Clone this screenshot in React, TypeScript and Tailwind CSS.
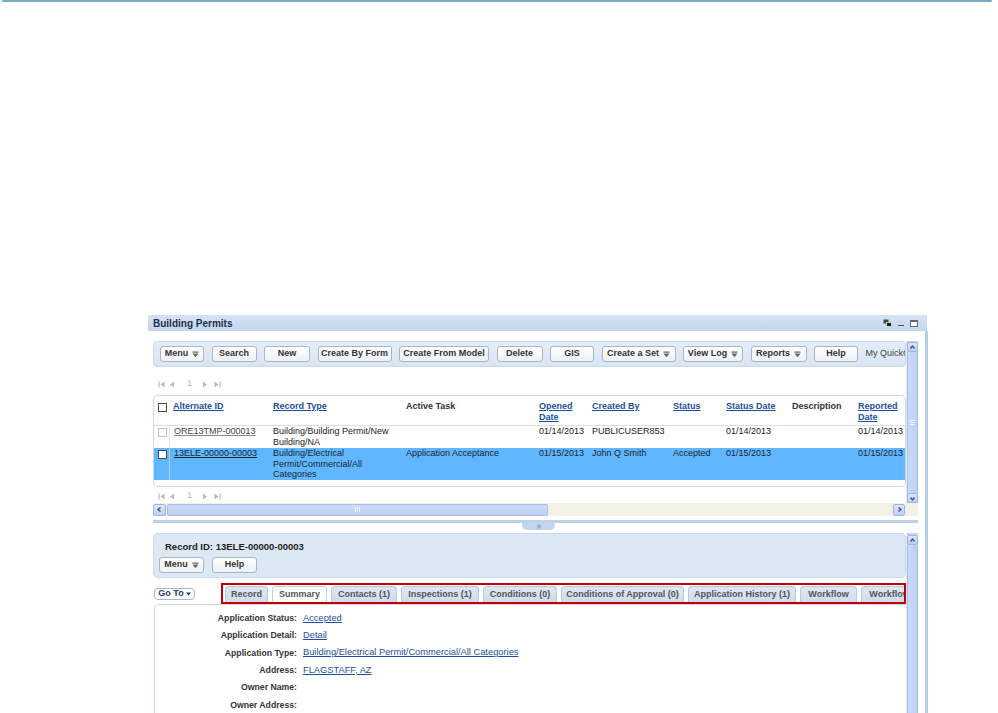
import React from 'react';

type Dir = 'up' | 'down' | 'left' | 'right';

const chevrons: Record<Dir, string> = {
  up: 'M1.5 4.5 L3.5 2 L5.5 4.5',
  down: 'M1.5 2.5 L3.5 5 L5.5 2.5',
  left: 'M4.5 1.5 L2 3.5 L4.5 5.5',
  right: 'M2.5 1.5 L5 3.5 L2.5 5.5',
};

function ArrowBtn({ dir, className = '' }: { dir: Dir; className?: string }) {
  return (
    <div
      className={`flex items-center justify-center rounded-[2px] border border-[#9fb5de] bg-gradient-to-b from-[#dbe6fb] to-[#bdd0f4] ${className}`}
    >
      <svg width="7" height="7" viewBox="0 0 7 7">
        <path d={chevrons[dir]} fill="none" stroke="#3d5488" strokeWidth="1.4" />
      </svg>
    </div>
  );
}

function MenuIcon() {
  return (
    <svg width="7" height="7" viewBox="0 0 7 7" className="ml-[4px]">
      <rect x="0.5" y="0.5" width="6" height="1.2" fill="#666" />
      <path d="M0.5 2.6 H6.5 L3.5 6.2 Z" fill="#666" />
    </svg>
  );
}

function Btn({ label, w, menu }: { label: string; w: string; menu?: boolean }) {
  return (
    <div
      className={`flex h-[16px] shrink-0 items-center justify-center rounded-[3px] border border-[#aab6c3] bg-gradient-to-b from-white to-[#edf1f5] text-[9px] font-bold text-[#333] ${w}`}
    >
      {label}
      {menu && <MenuIcon />}
    </div>
  );
}

function Pager() {
  return (
    <div className="flex h-[12px] items-center pl-[5px] text-[9px] text-[#b5b5b5]">
      <svg width="7" height="7" viewBox="0 0 7 7">
        <rect x="0.5" y="0.5" width="1.2" height="6" fill="#b9b9b9" />
        <path d="M6.5 0.5 V6.5 L2.5 3.5 Z" fill="#b9b9b9" />
      </svg>
      <svg width="6" height="7" viewBox="0 0 6 7" className="ml-[4px]">
        <path d="M5 0.5 V6.5 L1 3.5 Z" fill="#b9b9b9" />
      </svg>
      <span className="ml-[12px]">1</span>
      <svg width="6" height="7" viewBox="0 0 6 7" className="ml-[10px]">
        <path d="M1 0.5 V6.5 L5 3.5 Z" fill="#b9b9b9" />
      </svg>
      <svg width="7" height="7" viewBox="0 0 7 7" className="ml-[6px]">
        <path d="M0.5 0.5 V6.5 L4.5 3.5 Z" fill="#b9b9b9" />
        <rect x="5.3" y="0.5" width="1.2" height="6" fill="#b9b9b9" />
      </svg>
    </div>
  );
}

function Check({ light }: { light?: boolean }) {
  return (
    <div
      className={`mt-[2px] h-[9px] w-[9px] border bg-white ${light ? 'border-[#c4c4c4]' : 'border-[#4a4a4a]'}`}
    />
  );
}

const cols = 'grid grid-cols-[11px_104px_133px_133px_53px_81px_53px_66px_66px_1fr]';

const toolbar = [
  { label: 'Menu', w: 'w-[44px]', menu: true },
  { label: 'Search', w: 'w-[45px]' },
  { label: 'New', w: 'w-[46px]' },
  { label: 'Create By Form', w: 'w-[74px]' },
  { label: 'Create From Model', w: 'w-[90px]' },
  { label: 'Delete', w: 'w-[46px]' },
  { label: 'GIS', w: 'w-[44px]' },
  { label: 'Create a Set', w: 'w-[74px]', menu: true },
  { label: 'View Log', w: 'w-[60px]', menu: true },
  { label: 'Reports', w: 'w-[56px]', menu: true },
  { label: 'Help', w: 'w-[44px]' },
];

const tabs = [
  { label: 'Record', w: 'w-[43px]' },
  { label: 'Summary', w: 'w-[55px]', active: true },
  { label: 'Contacts (1)', w: 'w-[66px]' },
  { label: 'Inspections (1)', w: 'w-[78px]' },
  { label: 'Conditions (0)', w: 'w-[74px]' },
  { label: 'Conditions of Approval (0)', w: 'w-[123px]' },
  { label: 'Application History (1)', w: 'w-[108px]' },
  { label: 'Workflow', w: 'w-[57px]' },
  { label: 'Workflow', w: 'w-[57px]' },
];

const summary = [
  { label: 'Application Status:', value: 'Accepted' },
  { label: 'Application Detail:', value: 'Detail' },
  { label: 'Application Type:', value: 'Building/Electrical Permit/Commercial/All Categories' },
  { label: 'Address:', value: 'FLAGSTAFF, AZ' },
  { label: 'Owner Name:', value: '' },
  { label: 'Owner Address:', value: '' },
];

function HeadLink({ children }: { children: React.ReactNode }) {
  return <span className="text-[#1c4f9c] underline decoration-[#1c4f9c]">{children}</span>;
}

export default function App() {
  return (
    <div className="h-[713px] w-[998px] overflow-hidden bg-white font-['Liberation_Sans',Arial,sans-serif] text-[9px] text-[#222]">
      <div className="ml-[2px] h-[2px] w-[990px] rounded-full bg-[#72aec4]" />

      <div className="ml-[148px] mt-[313px] w-[780px]">
        {/* title bar */}
        <div className="flex h-[16px] w-[779px] items-center bg-gradient-to-b from-[#d5e3f3] to-[#c3d7ee] pl-[5px] pr-[9px]">
          <span className="text-[10px] font-bold text-[#1d2f4d]">Building Permits</span>
          <div className="ml-auto flex items-center gap-[6px]">
            <svg width="9" height="8" viewBox="0 0 9 8">
              <rect x="0.5" y="0.5" width="5" height="4" fill="#444" />
              <rect x="3.5" y="3.5" width="5" height="4" fill="#222" stroke="#fff" strokeWidth="0.6" />
            </svg>
            <div className="mt-[5px] h-[1.5px] w-[6px] bg-[#555]" />
            <div className="h-[7px] w-[8px] border border-t-2 border-[#666] bg-white" />
          </div>
        </div>

        <div className="flex">
          <div className="w-[770px] pl-[5px]">
            {/* top section */}
            <div className="flex pt-[10px]">
              <div className="w-[753px]">
                <div className="flex h-[26px] items-center gap-[7.5px] overflow-hidden rounded-[4px] border border-[#c9d9ea] bg-gradient-to-b from-[#e4edf7] to-[#d8e5f3] pl-[6px]">
                  {toolbar.map((b) => (
                    <Btn key={b.label} label={b.label} w={b.w} menu={b.menu} />
                  ))}
                  <span className="shrink-0 whitespace-nowrap text-[9px] text-[#444]">My QuickQ</span>
                </div>

                <div className="mt-[11px]">
                  <Pager />
                </div>

                <div className="mt-[5px] h-[92px] overflow-hidden rounded-[5px] border border-[#c9d8ea] bg-white">
                  <div className={`${cols} border-b border-[#d6e0eb] pl-[4px] pt-[5px] pb-[2px] font-bold leading-[11px]`}>
                    <Check />
                    <div className="pl-[4px]"><HeadLink>Alternate ID</HeadLink></div>
                    <div><HeadLink>Record Type</HeadLink></div>
                    <div className="text-[#333]">Active Task</div>
                    <div><HeadLink>Opened<br />Date</HeadLink></div>
                    <div><HeadLink>Created By</HeadLink></div>
                    <div><HeadLink>Status</HeadLink></div>
                    <div><HeadLink>Status Date</HeadLink></div>
                    <div className="text-[#333]">Description</div>
                    <div><HeadLink>Reported<br />Date</HeadLink></div>
                  </div>
                  <div className={`${cols} h-[22px] pl-[4px] leading-[11px]`}>
                    <Check light />
                    <div className="border-l border-[#dfe5ec] pl-[4px]">
                      <span className="text-[#444] underline decoration-[#888]">ORE13TMP-000013</span>
                    </div>
                    <div>Building/Building Permit/New<br />Building/NA</div>
                    <div />
                    <div>01/14/2013</div>
                    <div>PUBLICUSER853</div>
                    <div />
                    <div>01/14/2013</div>
                    <div />
                    <div>01/14/2013</div>
                  </div>
                  <div className={`${cols} h-[32px] bg-[#60b7fd] pl-[4px] leading-[10.5px] text-[#1b2633]`}>
                    <Check />
                    <div className="border-l border-[#a9d7fd] pl-[4px]">
                      <span className="underline decoration-[#1b2633]">13ELE-00000-00003</span>
                    </div>
                    <div>Building/Electrical<br />Permit/Commercial/All<br />Categories</div>
                    <div>Application Acceptance</div>
                    <div>01/15/2013</div>
                    <div>John Q Smith</div>
                    <div>Accepted</div>
                    <div>01/15/2013</div>
                    <div />
                    <div>01/15/2013</div>
                  </div>
                </div>

                <div className="mt-[3px]">
                  <Pager />
                </div>
              </div>

              {/* vertical scroll, top */}
              <div className="flex h-[162px] w-[12px] flex-col border-l border-[#e4e9ef] bg-[#c3d5f7] pt-[1px]">
                <ArrowBtn dir="up" className="h-[10px] w-[11px]" />
                <div className="flex flex-1 items-center justify-center border-x border-[#a9bfe6] bg-gradient-to-r from-[#c9daf9] to-[#bccff4]">
                  <div className="flex flex-col gap-[1px]">
                    <div className="h-[1px] w-[5px] bg-[#eef3fc]" />
                    <div className="h-[1px] w-[5px] bg-[#eef3fc]" />
                    <div className="h-[1px] w-[5px] bg-[#eef3fc]" />
                  </div>
                </div>
                <ArrowBtn dir="down" className="h-[10px] w-[11px]" />
              </div>
            </div>

            {/* horizontal scroll */}
            <div className="flex h-[13px] w-[765px] items-center bg-[#f3f1e5]">
              <ArrowBtn dir="left" className="h-[12px] w-[13px]" />
              <div className="ml-[1px] flex h-[12px] w-[381px] items-center justify-center rounded-[2px] border border-[#a9bfe6] bg-gradient-to-b from-[#cddcf9] to-[#bcd0f5]">
                <div className="flex gap-[1px]">
                  <div className="h-[5px] w-[1px] bg-[#eef3fc]" />
                  <div className="h-[5px] w-[1px] bg-[#eef3fc]" />
                  <div className="h-[5px] w-[1px] bg-[#eef3fc]" />
                </div>
              </div>
              <div className="w-[345px]" />
              <ArrowBtn dir="right" className="h-[12px] w-[12px]" />
            </div>

            {/* splitter */}
            <div className="mt-[4px] h-[3px] w-[765px] bg-[#bdd1e8]" />
            <div className="ml-[369px] flex h-[7px] w-[33px] items-center justify-center rounded-b-[5px] bg-[#c2d5eb]">
              <svg width="6" height="5" viewBox="0 0 6 5">
                <path d="M1 2.5 L3 0.8 L5 2.5 M1 4.5 L3 2.8 L5 4.5" fill="none" stroke="#6b7f9c" strokeWidth="0.8" />
              </svg>
            </div>

            {/* lower section */}
            <div className="mt-[3px] flex">
              <div className="w-[753px]">
                <div className="h-[45px] rounded-[5px] border border-[#c9d9ea] bg-[#dce8f4] pl-[11px] pt-[7px]">
                  <div className="text-[9.5px] leading-[12px] font-bold text-[#222]">Record ID: 13ELE-00000-00003</div>
                  <div className="mt-[4px] -ml-[6px] flex gap-[8px]">
                    <Btn label="Menu" w="w-[45px]" menu />
                    <Btn label="Help" w="w-[45px]" />
                  </div>
                </div>

                <div className="mt-[5px] flex h-[21px] items-center">
                  <div className="ml-[1px] flex h-[12px] w-[41px] items-center justify-center rounded-[4px] border border-[#a9b6c3] bg-white text-[9px] font-bold text-[#1e3c68]">
                    Go To
                    <svg width="5" height="4" viewBox="0 0 5 4" className="ml-[2px]">
                      <path d="M0 0.5 H5 L2.5 3.5 Z" fill="#1e3c68" />
                    </svg>
                  </div>
                  <div className="ml-[26px] flex h-[21px] w-[685px] items-end gap-[4px] overflow-hidden border-2 border-[#c00000] pl-[2px]">
                    {tabs.map((t, i) => (
                      <div
                        key={i}
                        className={`flex h-[16px] shrink-0 items-center justify-center rounded-t-[4px] border border-b-0 text-[9px] font-bold ${t.w} ${
                          t.active ? 'border-[#c2cfdd] bg-white text-[#555]' : 'border-[#b9c9da] bg-gradient-to-b from-[#dee8f3] to-[#cfdcea] text-[#555]'
                        }`}
                      >
                        {t.label}
                      </div>
                    ))}
                  </div>
                </div>

                <div className="ml-[1px] h-[120px] rounded-tl-[5px] border-l border-t border-[#c9d9ea] bg-white pt-[5px]">
                  <div className="grid grid-cols-[142px_1fr] gap-x-[6px]">
                    {summary.map((r) => (
                      <React.Fragment key={r.label}>
                        <div className="flex h-[17.3px] items-center justify-end text-[8.7px] font-bold text-[#333]">{r.label}</div>
                        <div className="flex h-[17.3px] items-center text-[9.3px]">
                          {r.value && <span className="text-[#1c4f9c] underline decoration-[#1c4f9c]">{r.value}</span>}
                        </div>
                      </React.Fragment>
                    ))}
                  </div>
                </div>
              </div>

              {/* vertical scroll, lower */}
              <div className="flex h-[200px] w-[12px] flex-col border-l border-[#e4e9ef] bg-[#c3d5f7] pt-[2px]">
                <ArrowBtn dir="up" className="h-[10px] w-[11px]" />
                <div className="flex-1 border-x border-[#a9bfe6] bg-gradient-to-r from-[#c9daf9] to-[#bccff4]" />
              </div>
            </div>
          </div>

          <div className="w-[7px]" />
          <div className="h-[400px] w-[3px] bg-[#b7cee8]" />
        </div>
      </div>
    </div>
  );
}
